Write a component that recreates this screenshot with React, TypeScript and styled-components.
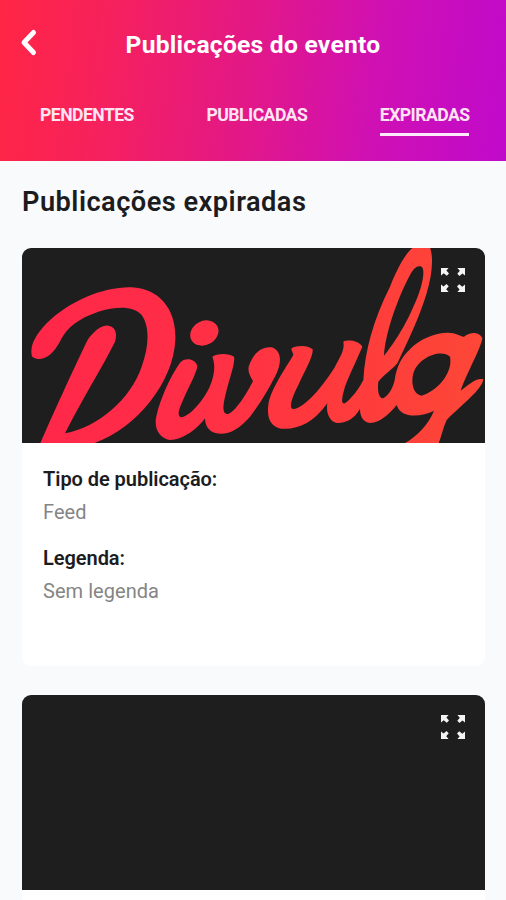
import React from "react";
import styled, { createGlobalStyle } from "styled-components";

const GlobalStyle = createGlobalStyle`
  * { box-sizing: border-box; }
  html, body { margin: 0; padding: 0; }
  body {
    height: 900px;
    overflow: hidden;
    background: #f9fafc;
    font-family: Roboto, "Liberation Sans", sans-serif;
    color: #1c1c1e;
  }
`;

const Screen = styled.div`
  height: 900px;
  overflow: hidden;
  display: flex;
  flex-direction: column;
`;

const Header = styled.header`
  flex: none;
  height: 161px;
  color: #fff;
  background: linear-gradient(97deg, #ff2644 0%, #f7215b 20%, #e31886 48%, #cf10b4 74%, #c00acb 100%);
`;

const TitleBar = styled.div`
  display: grid;
  grid-template-columns: 60px 1fr 60px;
  align-items: center;
  height: 89px;
`;

const BackButton = styled.button`
  display: flex;
  width: 60px;
  height: 60px;
  padding: 12px 0 0 18px;
  border: 0;
  background: none;
  color: inherit;
`;

const Title = styled.h1`
  margin: 0;
  text-align: center;
  white-space: nowrap;
  font-size: 24.6px;
  font-weight: 700;
  line-height: 30px;
  letter-spacing: 0.26px;
`;

const Tabs = styled.nav`
  display: flex;
  justify-content: space-between;
  padding: 15px 36.5px 0 40px;
`;

const Tab = styled.button<{ $active?: boolean }>`
  height: 32px;
  padding: 0 0 7px;
  border: 0;
  border-bottom: 3px solid ${(p) => (p.$active ? "#ffe9fc" : "transparent")};
  background: none;
  color: #ffe4f3;
  font: 700 17.6px/22px Roboto, sans-serif;
  letter-spacing: -0.54px;
`;

const Content = styled.main`
  display: flex;
  flex-direction: column;
  padding: 0 21px 0 22px;
`;

const Heading = styled.h2`
  margin: 0;
  height: 87px;
  padding-top: 24px;
  font-size: 27.2px;
  font-weight: 600;
  line-height: 34px;
  letter-spacing: 0.48px;
`;

const Card = styled.article`
  flex: none;
  height: 418px;
  margin-bottom: 29px;
  overflow: hidden;
  border-radius: 9px;
  background: #fff;
`;

const Cover = styled.div`
  position: relative;
  height: 195px;
  background: #1e1e1e;
`;

const Artwork = styled.svg`
  display: block;
  width: 100%;
  height: 100%;
`;

const ExpandButton = styled.button`
  position: absolute;
  top: 19px;
  right: 19px;
  display: flex;
  padding: 0;
  border: 0;
  background: none;
`;

const Details = styled.dl`
  margin: 0;
  padding: 22px 21px 0;
  font-size: 20px;
`;

const Label = styled.dt`
  font-weight: 600;
  line-height: 28px;
  letter-spacing: -0.05px;
`;

const Value = styled.dd`
  margin: 5px 0 18px;
  color: #858585;
  line-height: 28px;
  letter-spacing: 0.05px;
`;

const BackIcon = () => (
  <svg width="22" height="32" viewBox="0 0 22 32" fill="none" stroke="#fff" strokeWidth="5" strokeLinecap="round" strokeLinejoin="round">
    <path d="M15.5 5.5 6 15.5l9.5 10" />
  </svg>
);

const ExpandIcon = () => (
  <svg width="26" height="26" viewBox="0 0 26 26" fill="#f4f4f4">
    {[0, 90, 180, 270].map((angle) => (
      <path key={angle} transform={`rotate(${angle} 13 13)`} d="M1 1H8.6L6.4 3.6 9 6.5 6.8 8.7 3.7 6.2 1 8.6Z" />
    ))}
  </svg>
);

const BrandArtwork = () => (
  <Artwork viewBox="0 0 1389 585" preserveAspectRatio="none" aria-label="Divulg">
    <defs>
      <linearGradient id="brand" gradientUnits="userSpaceOnUse" x1="0" y1="0" x2="1389" y2="0">
        <stop offset="0" stopColor="#ff2648" />
        <stop offset=".3" stopColor="#ff2c48" />
        <stop offset=".6" stopColor="#ff3640" />
        <stop offset="1" stopColor="#fd4737" />
      </linearGradient>
      <linearGradient id="brandEnd" gradientUnits="userSpaceOnUse" x1="0" y1="0" x2="705" y2="0">
        <stop offset="0" stopColor="#ff3340" />
        <stop offset="1" stopColor="#fd4737" />
      </linearGradient>
    </defs>
    <g transform="translate(-21 -24)" fill="url(#brand)">
      <path d="M50 345C45 315 62 285 95 250C165 182 265 140 350 142C430 146 485 205 481 300C475 430 360 570 230 612H75C110 530 170 400 215 305C235 272 262 255 280 257C300 260 308 278 300 305C260 385 200 480 150 580C250 560 345 480 380 380C402 320 405 260 380 225C355 195 300 200 250 215C190 235 155 265 140 295C125 325 105 355 75 357C60 357 50 352 50 345Z" />
      <ellipse cx="568" cy="279" rx="44" ry="36" transform="rotate(-28 568 279)" />
      <path d="M495 368C510 352 540 355 547 378C545 400 520 440 500 490C488 515 488 532 500 532C530 525 575 470 590 425C600 395 600 370 592 350C605 340 640 338 657 350C662 370 640 420 628 480C622 510 626 524 640 522C660 515 690 470 714 424C708 410 698 400 701 380C715 335 745 318 770 322C800 332 800 365 785 400C765 440 740 485 705 530C670 570 640 585 605 580C580 575 570 555 570 535C545 570 500 600 465 600C430 595 415 560 425 525C435 480 465 410 495 368Z" />
    </g>
    <g transform="translate(684 -24)" fill="url(#brandEnd)">
      <path fillRule="evenodd" d="M125 325C140 315 175 315 188 328C190 350 165 390 145 435C125 475 115 505 130 507C165 505 225 430 255 380C270 350 285 330 280 305C295 298 325 302 337 320C325 350 300 400 285 440C275 475 272 492 285 490C300 480 325 450 340 420C345 330 370 240 420 140C440 90 465 40 490 22H540C552 55 545 110 530 160C505 240 475 300 443 368C430 385 400 405 385 425C382 450 385 475 400 475C418 465 430 440 434 420C440 380 455 350 480 328C510 295 570 272 610 280C625 283 635 292 642 290C662 275 687 275 697 294C695 320 650 400 632 452C655 435 680 412 700 418C695 450 640 490 590 540C578 565 575 590 565 612H460C500 590 535 555 552 512C530 523 500 530 475 525C455 520 445 510 440 495C415 525 390 548 360 549C340 547 330 530 330 507C310 540 285 550 260 549C240 545 227 520 232 490C190 550 140 570 95 566C60 560 50 530 55 495C60 450 110 380 130 345C128 335 122 330 125 325ZM515 80C528 90 515 150 490 200C465 260 425 320 402 347C405 280 445 170 480 105C493 80 505 76 515 80ZM600 350C610 400 560 455 515 467C490 464 482 430 490 400C505 350 575 325 600 350Z" />
    </g>
  </Artwork>
);

const tabs = ["PENDENTES", "PUBLICADAS", "EXPIRADAS"];

interface Post {
  id: number;
  branded?: boolean;
  details: { label: string; value: string }[];
}

const posts: Post[] = [
  {
    id: 1,
    branded: true,
    details: [
      { label: "Tipo de publicação:", value: "Feed" },
      { label: "Legenda:", value: "Sem legenda" },
    ],
  },
  { id: 2, details: [] },
];

export default function App() {
  return (
    <Screen>
      <GlobalStyle />
      <Header>
        <TitleBar>
          <BackButton aria-label="Voltar"><BackIcon /></BackButton>
          <Title>Publicações do evento</Title>
        </TitleBar>
        <Tabs>
          {tabs.map((tab) => (
            <Tab key={tab} $active={tab === "EXPIRADAS"}>{tab}</Tab>
          ))}
        </Tabs>
      </Header>
      <Content>
        <Heading>Publicações expiradas</Heading>
        {posts.map((post) => (
          <Card key={post.id}>
            <Cover>
              {post.branded && <BrandArtwork />}
              <ExpandButton aria-label="Expandir"><ExpandIcon /></ExpandButton>
            </Cover>
            <Details>
              {post.details.map(({ label, value }) => (
                <React.Fragment key={label}>
                  <Label>{label}</Label>
                  <Value>{value}</Value>
                </React.Fragment>
              ))}
            </Details>
          </Card>
        ))}
      </Content>
    </Screen>
  );
}
